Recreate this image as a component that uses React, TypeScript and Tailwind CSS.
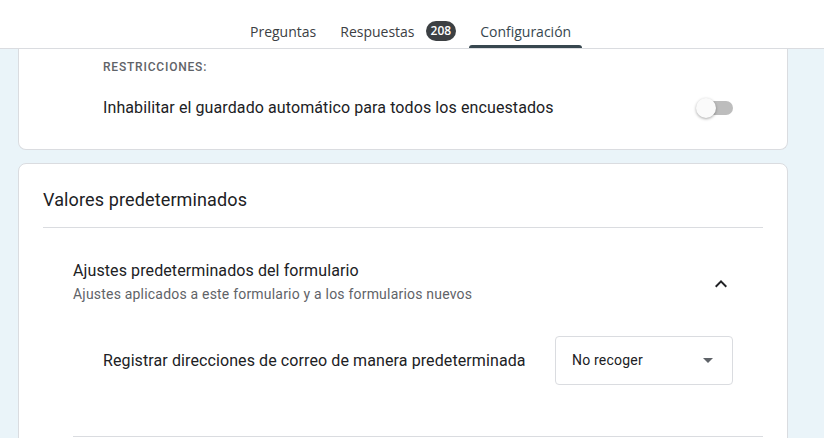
import { useState } from "react";

const tabs = [
   { name: "Preguntas" },
   { name: "Respuestas", badge: "208" },
   { name: "Configuración", active: true },
];

function Toggle({ on, onClick }: any) {
   return (
      <button onClick={onClick} className="relative flex items-center w-[37px] h-[20px] shrink-0">
         <span className="absolute left-[4px] right-0 h-[14px] rounded-full bg-[#bdbdbd]" />
         <span
            className={
               "absolute top-0 w-[20px] h-[20px] rounded-full bg-[#fafafa] shadow-[0_1px_3px_rgba(0,0,0,0.35)] " +
               (on ? "left-[17px]" : "left-0")
            }
         />
      </button>
   );
}

export default function App() {
   const [autoSave, setAutoSave] = useState(false);
   const [open, setOpen] = useState(true);

   return (
      <div className="w-[824px] h-[438px] overflow-hidden bg-[#eaf4f9] font-['Roboto',sans-serif] text-[#202124]">
         <header className="h-[49px] bg-white border-b border-[#dadce0] flex pl-[238px] font-['Open_Sans',sans-serif]">
            {tabs.map(({ name, badge, active }: any, index: number) => (
               <div key={index} className="relative flex items-center pt-[14px] px-[12px] h-full">
                  <span className={"text-[14px] font-medium " + (active ? "text-[#37474f]" : "text-[#3c4043]")}>
                     {name}
                  </span>
                  {badge && (
                     <span className="ml-[11px] h-[20px] px-[5px] rounded-full bg-[#3c4043] text-white text-[12px] font-semibold leading-[20px]">
                        {badge}
                     </span>
                  )}
                  {active && (
                     <span className="absolute bottom-0 left-[1px] right-[1px] h-[3px] rounded-t-[3px] bg-[#37474f]" />
                  )}
               </div>
            ))}
         </header>

         <section className="ml-[18px] w-[770px] bg-white border border-t-0 border-[#dadce0] rounded-b-lg pt-[10px] pb-[29px] pl-[84px] pr-[54px]">
            <p className="text-[12px] leading-[16px] font-medium tracking-[0.8px] uppercase text-[#5f6368]">
               Restricciones:
            </p>
            <div className="flex items-center justify-between mt-[21px] h-[24px]">
               <span className="text-[16px] leading-[24px] tracking-[0.1px]">
                  Inhabilitar el guardado automático para todos los encuestados
               </span>
               <Toggle on={autoSave} onClick={() => setAutoSave(!autoSave)} />
            </div>
         </section>

         <section className="ml-[18px] mt-[13px] w-[770px] bg-white border border-[#dadce0] rounded-lg pt-[24px] px-[24px]">
            <h2 className="text-[18px] leading-[24px] tracking-[0.13px]">Valores predeterminados</h2>
            <div className="mt-[15px] border-t border-[#dadce0]" />

            <div className="pl-[30px]">
               <div className="flex items-center justify-between pt-[31px] pr-[30px]">
                  <div>
                     <p className="text-[16px] leading-[24px] tracking-[0.1px]">Ajustes predeterminados del formulario</p>
                     <p className="mt-[1px] text-[14px] leading-[20px] tracking-[0.2px] text-[#5f6368]">
                        Ajustes aplicados a este formulario y a los formularios nuevos
                     </p>
                  </div>
                  <button onClick={() => setOpen(!open)} className="w-[24px] h-[24px] flex items-center justify-center mt-[4px]">
                     <svg width="24" height="24" viewBox="0 0 24 24" fill="#202124">
                        <path d={open ? "M7.41 15.41 12 10.83l4.59 4.58L18 14l-6-6-6 6z" : "M7.41 8.59 12 13.17l4.59-4.58L18 10l-6 6-6-6z"} />
                     </svg>
                  </button>
               </div>

               {open && (
                  <div className="flex items-center justify-between pl-[30px] pr-[30px] mt-[32px]">
                     <span className="text-[16px] leading-[24px] tracking-[0.1px]">Registrar direcciones de correo de manera predeterminada</span>
                     <div className="w-[178px] h-[49px] border border-[#dadce0] rounded-[4px] flex items-center justify-between pl-[16px] pr-[19px]">
                        <span className="text-[14px] tracking-[0.2px]">No recoger</span>
                        <span className="w-0 h-0 border-l-[5px] border-r-[5px] border-t-[5px] border-l-transparent border-r-transparent border-t-[#5f6368]" />
                     </div>
                  </div>
               )}
               <div className="mt-[51px] border-t border-[#dadce0]" />
            </div>
            <div className="h-[40px]" />
         </section>
      </div>
   );
}
